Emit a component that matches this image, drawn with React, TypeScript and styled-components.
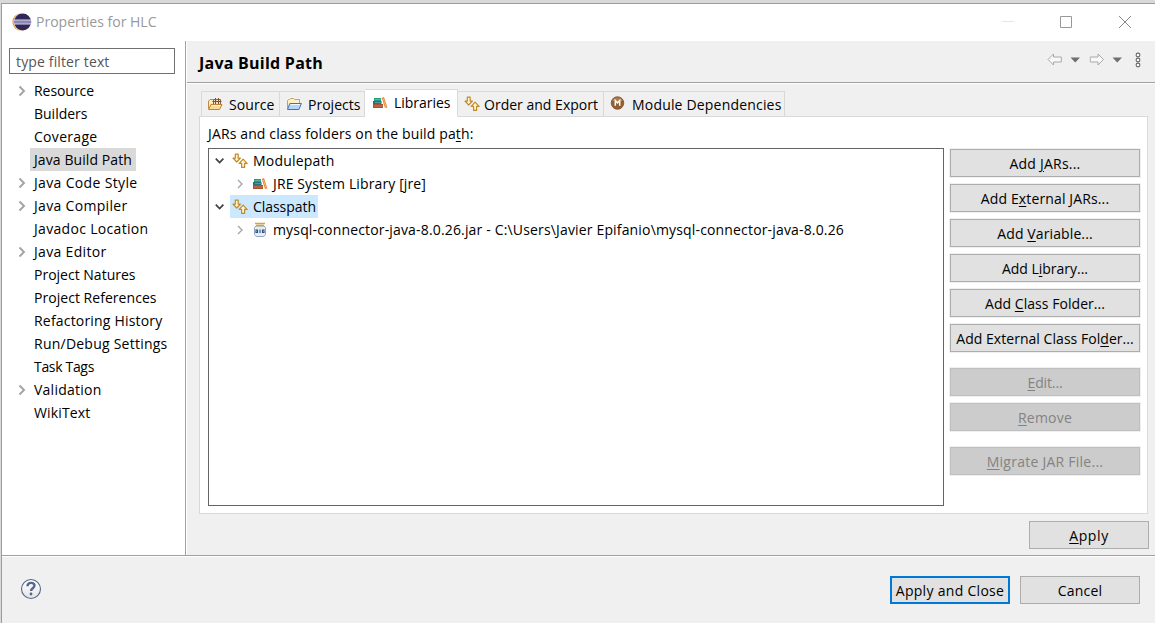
import React, { useLayoutEffect, useRef, useState } from "react";
import styled, { createGlobalStyle, css } from "styled-components";

const GlobalStyle = createGlobalStyle`
  * { box-sizing: border-box; }
  body {
    margin: 0;
    background: #d9d9d9;
    color: #000;
    font: 14px/20px "Open Sans", "Noto Sans", sans-serif;
  }
`;

const Window = styled.div`
  width: 1155px;
  height: 623px;
  padding: 3px 0 0 1px;
  overflow: hidden;
`;

const Dialog = styled.div`
  display: flex;
  flex-direction: column;
  height: 100%;
  background: #f0f0f0;
  border: solid #9c9c9c;
  border-width: 1px 0 0 1px;
`;

const TitleBar = styled.header`
  display: flex;
  align-items: center;
  height: 37px;
  flex: none;
  padding: 0 23px 1px 10px;
  background: #fff;
  color: #999;
`;

const TitleText = styled.div`
  flex: 1;
  padding-left: 4px;
`;

const WindowControls = styled.div`
  display: flex;
  gap: 46px;
`;

const Body = styled.div`
  display: flex;
  flex: none;
  height: 514px;
`;

const Sidebar = styled.nav`
  width: 184px;
  flex: none;
  padding: 7px 0 0 7px;
  background: #fff;
  border-right: 1px solid #a0a0a0;
`;

const FilterBox = styled.div`
  width: 166px;
  height: 26px;
  padding: 3px 6px;
  margin-bottom: 5px;
  border: 1px solid #707070;
  color: #555;
  line-height: 20px;
`;

const NavRow = styled.div`
  display: flex;
  align-items: center;
  height: 23px;
`;

const NavArrow = styled.span`
  display: flex;
  justify-content: center;
  width: 21px;
  padding: 1px 0 0 5px;
`;

const NavLabel = styled.span<{ $selected?: boolean }>`
  height: 23px;
  padding: 2px 4px 1px;
  background: ${(p) => (p.$selected ? "#d9d9d9" : "transparent")};
`;

const Main = styled.main`
  display: flex;
  flex-direction: column;
  flex: 1;
  min-width: 0;
  border-left: 1px solid #fff;
`;

const PageHeader = styled.div`
  display: flex;
  align-items: center;
  justify-content: space-between;
  height: 42px;
  flex: none;
  padding: 2px 12px 0 12px;
  border-bottom: 1px solid #a0a0a0;
  box-shadow: 0 1px 0 #fff;
`;

const PageTitle = styled.h1`
  margin: 0;
  font-size: 16px;
  line-height: 22px;
  font-weight: 700;
`;

const HistoryTools = styled.div`
  display: flex;
  align-items: center;
  height: 20px;
  margin-bottom: 5px;
`;

const TabStrip = styled.div`
  display: flex;
  align-items: flex-end;
  height: 28px;
  margin: 6px 0 -1px 14px;
  position: relative;
  z-index: 1;
`;

const Tab = styled.div<{ $w: number; $gap: number; $active?: boolean }>`
  display: flex;
  align-items: center;
  width: ${(p) => p.$w}px;
  height: 26px;
  padding: 1px 0 0 6px;
  border: solid #d9d9d9;
  border-width: 1px 1px 1px 0;
  background: #f0f0f0;
  svg { margin: 0 ${(p) => p.$gap}px 1px 0; flex: none; }
  &:first-child { border-left-width: 1px; padding-left: 5px; }
  ${(p) =>
    p.$active &&
    css`
      height: 28px;
      padding: 0 0 1px 7px;
      border-bottom-color: #fff;
      background: #fff;
      svg { margin-bottom: 0; }
    `}
`;

const TabPanel = styled.section`
  width: 949px;
  height: 398px;
  margin-left: 12px;
  padding: 7px 7px 0 8px;
  background: #fff;
  border: 1px solid #d9d9d9;
`;

const PanelColumns = styled.div`
  display: flex;
  gap: 6px;
  margin-top: 4px;
`;

const TreeBox = styled.div`
  width: 736px;
  height: 358px;
  border: 1px solid #646464;
`;

const TreeRow = styled.div<{ $level: number }>`
  display: flex;
  align-items: center;
  height: 23px;
  padding-left: ${(p) => 1 + p.$level * 20}px;
`;

const TreeArrow = styled.span`
  display: flex;
  justify-content: center;
  width: 20px;
`;

const TreeLabel = styled.span<{ $selected?: boolean }>`
  display: flex;
  align-items: center;
  gap: 5px;
  height: 23px;
  padding: 0 2px;
  background: ${(p) => (p.$selected ? "#cce8ff" : "transparent")};
`;

const ButtonColumn = styled.div`
  display: flex;
  flex-direction: column;
  gap: 7px;
  padding-top: 1px;
`;

const ButtonGroup = styled.div`
  display: flex;
  flex-direction: column;
  gap: 7px;
  margin-bottom: 9px;
`;

const Button = styled.button<{ $w: number; $primary?: boolean; $halo?: boolean }>`
  display: flex;
  align-items: center;
  justify-content: center;
  width: ${(p) => p.$w}px;
  height: 28px;
  padding: 1px 0 0;
  font: inherit;
  color: #000;
  background: #e1e1e1;
  border: ${(p) => (p.$primary ? "2px solid #0078d7" : "1px solid #adadad")};
  box-shadow: ${(p) => (p.$halo ? "0 0 0 1px #f0f0f0" : "none")};
  &:disabled {
    color: #838383;
    background: #ccc;
    border-color: #bfbfbf;
  }
`;

const ApplyRow = styled.div`
  display: flex;
  justify-content: flex-end;
  padding: 7px 6px 0 0;
`;

const Footer = styled.footer`
  display: flex;
  align-items: flex-start;
  flex: 1;
  padding: 20px 15px 0 18px;
  border-top: 1px solid #a0a0a0;
  box-shadow: inset 0 1px 0 #fff;
`;

const FooterButtons = styled.div`
  display: flex;
  gap: 10px;
  margin-left: auto;
`;

const TextRun = styled.span`
  display: inline-block;
  white-space: pre;
  u { text-decoration-thickness: 1px; text-underline-offset: 2px; }
`;

/* Text tracked to a given width; "&" marks the mnemonic letter. */
function Label({ text, w }: { text: string; w: number }) {
  const ref = useRef<HTMLSpanElement>(null);
  const [spacing, setSpacing] = useState(0);
  const at = text.indexOf("&");
  const plain = text.replace("&", "");
  useLayoutEffect(() => {
    if (ref.current) {
      const natural = ref.current.getBoundingClientRect().width - spacing * plain.length;
      setSpacing((w - natural) / plain.length);
    }
  }, [text, w]);
  return (
    <TextRun ref={ref} style={{ letterSpacing: spacing }}>
      {at < 0 ? text : <>{text.slice(0, at)}<u>{text[at + 1]}</u>{text.slice(at + 2)}</>}
    </TextRun>
  );
}

const EclipseLogo = () => (
  <svg width="20" height="20" viewBox="0 0 20 20">
    <circle cx="9.2" cy="10" r="8.8" fill="#f49b3c" />
    <circle cx="10.6" cy="10" r="8.9" fill="#fff" />
    <circle cx="10.6" cy="10" r="8.5" fill="#2e2757" />
    <path d="M2 8.2h17.2M2 11.8h17.2" stroke="#d9d6ea" strokeWidth="1.2" />
    <path d="M2 10h17.2" stroke="#8d84bb" strokeWidth="2" />
  </svg>
);

const ChevronRight = ({ small }: { small?: boolean }) =>
  small ? (
    <svg width="7" height="10" viewBox="0 0 7 10"><path d="M1 1l4 4-4 4" fill="none" stroke="#a8a8a8" strokeWidth="1.4" /></svg>
  ) : (
    <svg width="8" height="12" viewBox="0 0 8 12"><path d="M1.5 1.5L6 6l-4.5 4.5" fill="none" stroke="#a3a3a3" strokeWidth="1.9" /></svg>
  );

const ChevronDown = () => (
  <svg width="10" height="7" viewBox="0 0 10 7"><path d="M.8 1.7l3.8 3.8 3.8-3.8" fill="none" stroke="#404040" strokeWidth="1.7" /></svg>
);

const SourceIcon = () => (
  <svg width="16" height="16" viewBox="0 0 16 16">
    <path d="M1.5 12.5V5L3 3.5h3L7 5v3z" fill="#fbe9bd" stroke="#c18b45" />
    <path d="M6.5 3.5h7v5h-7z" fill="#f1dfc9" stroke="#8b6244" />
    <path d="M8.5 2v6M11.5 2v6M5.5 5.5h9" stroke="#7c5136" />
    <path d="M1.5 13.5l2.500-5h11l-2.500 5z" fill="#fbd998" stroke="#bd8339" strokeLinejoin="round" />
    <path d="M4.8 9.500h8.700" stroke="#fff0cb" />
  </svg>
);

const ProjectsIcon = () => (
  <svg width="16" height="16" viewBox="0 0 16 16">
    <path d="M1.5 12.5V4.5l1-1h1l1-1h3l1 1h5V7.5" fill="#fff0c7" stroke="#c3a15f" />
    <path d="M1.5 13.5l2.3-6H15.4l-2.5 6z" fill="#b6d5f8" stroke="#4670bb" strokeLinejoin="round" />
    <path d="M4.5 8.5h9.5" stroke="#edf7ff" />
  </svg>
);

const LibraryIcon = () => (
  <svg width="16" height="16" viewBox="0 0 16 16">
    <path d="M2 3h7v3H2z" fill="#279b7f" />
    <path d="M3 4.5h6" stroke="#65bd9a" strokeWidth=".8" />
    <path d="M1 6h8.500v3H1z" fill="#28717f" />
    <path d="M3 7.5h6.500" stroke="#58a6b1" strokeWidth=".8" />
    <path d="M1 9h10v4H1z" fill="#a6532f" />
    <path d="M2 11h9" stroke="#c67953" />
    <path d="M9.8 3l2.200-1 3.400 10.500-2.400.5z" fill="#e4822e" />
    <path d="M11.200 3.500l3 9" stroke="#ffc27b" strokeWidth=".8" />
  </svg>
);

const OrderIcon = () => (
  <svg width="16" height="16" viewBox="0 0 16 16" fill="#fff5cf" stroke="#c1892b" strokeWidth="1.2" strokeLinejoin="round">
    <path d="M3.3 1.2h2.900v4h2.200L4.750 9 1 5.200h2.300z" />
    <path d="M9.600 14.400h3v-4h2.500L11.100 6.200 7.200 10.400h2.400z" />
  </svg>
);

const ModuleIcon = () => (
  <svg width="16" height="16" viewBox="0 0 16 16">
    <circle cx="7.5" cy="7" r="6.3" fill="#936034" stroke="#7b4a24" strokeWidth=".7" />
    <path d="M2.2 5a5.7 5.7 0 0 1 10.6 0z" fill="#b98b60" opacity=".7" />
    <path d="M5.3 9.8V4.500l2.200 2.300 2.200-2.300v5.300" fill="none" stroke="#fff" strokeWidth="1.5" />
  </svg>
);

const JarIcon = () => (
  <svg width="16" height="16" viewBox="0 0 16 16">
    <path d="M4 4L2.500 5.500v7L4 14.500h8l1.500-2v-7L12 4z" fill="#e3ecf7" stroke="#91a8c3" />
    <path d="M3 1.500h10M4 3.500h8" stroke="#d2a43b" strokeWidth="1.3" />
    <path d="M4 8h1.500v2.500H4zM8 7.500v3.500M10.500 8H12v2.500h-1.500z" fill="none" stroke="#2b527f" strokeWidth="1.1" />
  </svg>
);

const NavArrowIcon = ({ forward }: { forward?: boolean }) => (
  <svg width="15" height="13" viewBox="0 0 15 13">
    <path
      d={forward ? "M.7 4h7.800V1L14 6.500 8.500 12V9H.7z" : "M14.300 4H6.500V1L1 6.500 6.500 12V9h7.800z"}
      fill="#f8f8f8" stroke="#a8a8a8" strokeLinejoin="round"
    />
  </svg>
);

const Toolbar = () => (
  <svg width="96" height="16" viewBox="0 0 96 16">
    <g transform="translate(0 1)"><NavArrowIcon /></g>
    <path d="M23.500 5.500h9.500L28.250 10.500z" fill="#6d6e71" />
    <g transform="translate(42.500 1)"><NavArrowIcon forward /></g>
    <path d="M65.500 5.500h9.500L70.250 10.500z" fill="#6d6e71" />
    <g fill="#fff" stroke="#666" strokeWidth="1.1">
      <circle cx="91" cy="3" r="1.9" /><circle cx="91" cy="8" r="1.9" /><circle cx="91" cy="13" r="1.9" />
    </g>
  </svg>
);

const HelpIcon = () => (
  <svg width="22" height="24" viewBox="0 0 22 24">
    <defs><linearGradient id="help" x2="0" y2="1"><stop stopColor="#fff" /><stop offset="1" stopColor="#e4e4e4" /></linearGradient></defs>
    <circle cx="11" cy="13" r="9.5" fill="url(#help)" stroke="#53678d" strokeWidth="1.1" />
    <path d="M7.500 10.200c0-4.300 7-4.400 7-.6 0 2.600-3.500 2.700-3.500 5.400" fill="none" stroke="#53678d" strokeWidth="2.4" />
    <circle cx="11" cy="18" r="1.4" fill="#53678d" />
  </svg>
);

type Nav = { text: string; w: number; branch?: boolean; selected?: boolean };
const navItems: Nav[] = [
  { text: "Resource", w: 60, branch: true },
  { text: "Builders", w: 53.5 },
  { text: "Coverage", w: 63.5 },
  { text: "Java Build Path", w: 98, selected: true },
  { text: "Java Code Style", w: 103.5, branch: true },
  { text: "Java Compiler", w: 93.5, branch: true },
  { text: "Javadoc Location", w: 114.5 },
  { text: "Java Editor", w: 72.5, branch: true },
  { text: "Project Natures", w: 101.5 },
  { text: "Project References", w: 122.5 },
  { text: "Refactoring History", w: 128.5 },
  { text: "Run/Debug Settings", w: 133.5 },
  { text: "Task Tags", w: 60 },
  { text: "Validation", w: 67.5, branch: true },
  { text: "WikiText", w: 56.5 },
];

const tabs = [
  { text: "Source", w: 45.5, tab: 79, gap: 6, icon: <SourceIcon /> },
  { text: "Projects", w: 52.5, tab: 85, gap: 6, icon: <ProjectsIcon /> },
  { text: "Libraries", w: 56.5, tab: 93, gap: 6, icon: <LibraryIcon />, active: true },
  { text: "Order and Export", w: 114, tab: 146, gap: 4, icon: <OrderIcon /> },
  { text: "Module Dependencies", w: 149.5, tab: 181, gap: 6, icon: <ModuleIcon /> },
];

const treeRows = [
  { text: "Modulepath", w: 81.5, level: 0, icon: <OrderIcon /> },
  { text: "JRE System Library [jre]", w: 153, level: 1, icon: <LibraryIcon /> },
  { text: "Classpath", w: 63, level: 0, icon: <OrderIcon />, selected: true },
  { text: "mysql-connector-java-8.0.26.jar - C:\\Users\\Javier Epifanio\\mysql-connector-java-8.0.26", w: 571, level: 1, icon: <JarIcon /> },
];

const buttonGroups = [
  {
    disabled: false,
    items: [
      { text: "Add &JARs...", w: 71 },
      { text: "Add E&xternal JARs...", w: 128.5 },
      { text: "Add &Variable...", w: 95.5 },
      { text: "Add L&ibrary...", w: 86 },
      { text: "Add &Class Folder...", w: 120 },
      { text: "Add External Class Fol&der...", w: 177.5 },
    ],
  },
  { disabled: true, items: [{ text: "&Edit...", w: 35 }, { text: "&Remove", w: 54 }] },
  { disabled: true, items: [{ text: "&Migrate JAR File...", w: 116.5 }] },
];

export default function App() {
  return (
    <Window>
      <GlobalStyle />
      <Dialog>
        <TitleBar>
          <EclipseLogo />
          <TitleText><Label text="Properties for HLC" w={120.5} /></TitleText>
          <WindowControls>
            <svg width="12" height="12"><path d="M0 5.500h12" stroke="#e6e6e6" /></svg>
            <svg width="12" height="12"><path d="M.5.5h11v11H.5z" fill="none" stroke="#999" /></svg>
            <svg width="14" height="12"><path d="M1 0l12 12M13 0L1 12" stroke="#888" /></svg>
          </WindowControls>
        </TitleBar>
        <Body>
          <Sidebar>
            <FilterBox><Label text="type filter text" w={93.5} /></FilterBox>
            {navItems.map((n) => (
              <NavRow key={n.text}>
                <NavArrow>{n.branch && <ChevronRight />}</NavArrow>
                <NavLabel $selected={n.selected}><Label text={n.text} w={n.w} /></NavLabel>
              </NavRow>
            ))}
          </Sidebar>
          <Main>
            <PageHeader>
              <PageTitle><Label text="Java Build Path" w={124} /></PageTitle>
              <HistoryTools><Toolbar /></HistoryTools>
            </PageHeader>
            <TabStrip>
              {tabs.map((t) => (
                <Tab key={t.text} $w={t.tab} $gap={t.gap} $active={t.active}>{t.icon}<Label text={t.text} w={t.w} /></Tab>
              ))}
            </TabStrip>
            <TabPanel>
              <Label text="JARs and class folders on the build pa&th:" w={265.5} />
              <PanelColumns>
                <TreeBox>
                  {treeRows.map((r) => (
                    <TreeRow key={r.text} $level={r.level}>
                      <TreeArrow>{r.level ? <ChevronRight small /> : <ChevronDown />}</TreeArrow>
                      <TreeLabel $selected={r.selected}>{r.icon}<Label text={r.text} w={r.w} /></TreeLabel>
                    </TreeRow>
                  ))}
                </TreeBox>
                <ButtonColumn>
                  {buttonGroups.map((g, i) => (
                    <ButtonGroup key={i}>
                      {g.items.map((b) => (
                        <Button key={b.text} $w={190} $halo disabled={g.disabled}><Label text={b.text} w={b.w} /></Button>
                      ))}
                    </ButtonGroup>
                  ))}
                </ButtonColumn>
              </PanelColumns>
            </TabPanel>
            <ApplyRow><Button $w={120}><Label text="&Apply" w={39.5} /></Button></ApplyRow>
          </Main>
        </Body>
        <Footer>
          <HelpIcon />
          <FooterButtons>
            <Button $w={120} $primary><Label text="Apply and Close" w={108.5} /></Button>
            <Button $w={120}><Label text="Cancel" w={44.5} /></Button>
          </FooterButtons>
        </Footer>
      </Dialog>
    </Window>
  );
}
